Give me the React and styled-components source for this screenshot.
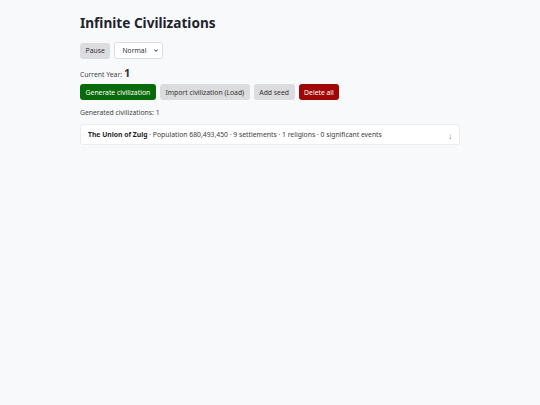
import React, { useState } from "react";
import styled, { createGlobalStyle } from "styled-components";

const GlobalStyle = createGlobalStyle`
  html, body {
    margin: 0;
    padding: 0;
    background: #f8f9fb;
    font-family: "Noto Sans", "Open Sans", sans-serif;
    color: #222222;
  }
`;

const Page = styled.main`
  width: 380px;
  margin: 0 auto;
  padding-top: 14px;
`;

const Title = styled.h1`
  font-size: 13.6px;
  line-height: 18px;
  font-weight: 700;
  margin: 0 0 10px;
  color: #1f232b;
`;

const Row = styled.div`
  display: flex;
  align-items: center;
  gap: 4px;
`;

const Button = styled.button`
  font-family: inherit;
  font-size: 6.8px;
  height: 16px;
  padding: 0 5.6px;
  border: none;
  border-radius: 3px;
  cursor: pointer;
  color: ${(p) => (p.$variant ? "#ffffff" : "#333333")};
  background: ${(p) =>
    p.$variant === "green" ? "#086a08" : p.$variant === "red" ? "#a00606" : "#dcdcde"};
`;

const SelectWrap = styled.div`
  position: relative;
  display: inline-flex;
`;

const Select = styled.select`
  appearance: none;
  font-family: inherit;
  font-size: 6.8px;
  width: 49px;
  height: 17px;
  padding: 0 0 0 7px;
  border: 1px solid #dedfe2;
  border-radius: 3px;
  background: #ffffff;
  color: #333333;
`;

const Chevron = styled.svg`
  position: absolute;
  right: 5px;
  top: 7px;
  width: 4px;
  height: 3px;
  pointer-events: none;
`;

const Year = styled.div`
  font-size: 6.8px;
  line-height: 15px;
  color: #444444;
  margin: 6px 0 2px;
  display: flex;
  align-items: baseline;
  gap: 2px;

  strong {
    font-size: 11px;
    color: #333333;
  }
`;

const Info = styled.div`
  font-size: 6.8px;
  line-height: 10px;
  color: #444444;
  margin: 8px 0 6px;
`;

const Card = styled.div`
  display: flex;
  align-items: center;
  justify-content: space-between;
  box-sizing: border-box;
  background: #ffffff;
  border: 1px solid #ebecef;
  border-radius: 3px;
  padding: 0 7px;
  height: 21px;
  font-size: 6.8px;
  color: #3a3a3a;

  b {
    color: #1f1f1f;
  }
`;

const Arrow = styled.span`
  color: #666666;
  font-size: 8px;
  padding-top: 2px;
`;

export default function App() {
  const [speed, setSpeed] = useState("Normal");
  return (
    <>
      <GlobalStyle />
      <Page>
        <Title>Infinite Civilizations</Title>
        <Row>
          <Button>Pause</Button>
          <SelectWrap>
            <Select value={speed} onChange={(e) => setSpeed(e.target.value)}>
              <option>Slow</option>
              <option>Normal</option>
              <option>Fast</option>
            </Select>
            <Chevron viewBox="0 0 4 3">
              <path d="M0.3 0.5 L2 2.4 L3.7 0.5" fill="none" stroke="#333333" strokeWidth="1" />
            </Chevron>
          </SelectWrap>
        </Row>
        <Year>
          Current Year: <strong>1</strong>
        </Year>
        <Row>
          <Button $variant="green">Generate civilization</Button>
          <Button>Import civilization (Load)</Button>
          <Button>Add seed</Button>
          <Button $variant="red">Delete all</Button>
        </Row>
        <Info>Generated civilizations: 1</Info>
        <Card>
          <span>
            <b>The Union of Zuig</b> · Population 680,493,450 · 9 settlements · 1
            religions · 0 significant events
          </span>
          <Arrow>↓</Arrow>
        </Card>
      </Page>
    </>
  );
}
